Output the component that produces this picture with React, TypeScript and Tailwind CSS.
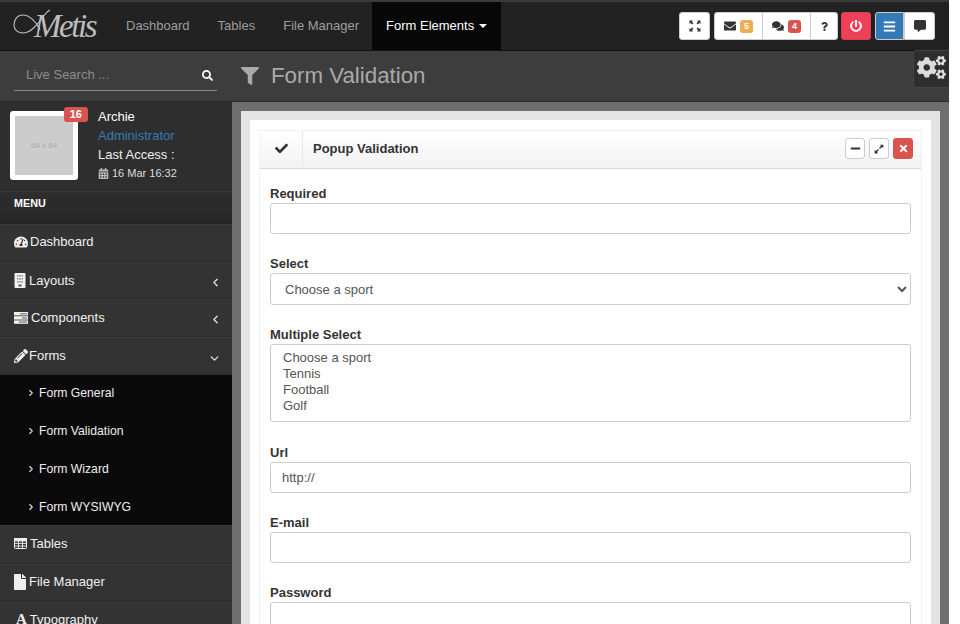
import React from "react";
import {
  FaCalendarAlt,
  FaCheck,
  FaCogs,
  FaCommentAlt,
  FaComments,
  FaEnvelope,
  FaExpandAlt,
  FaFile,
  FaFilter,
  FaMinus,
  FaPencilAlt,
  FaPowerOff,
  FaQuestion,
  FaSearch,
  FaTachometerAlt,
  FaTimes,
  FaBars,
} from "react-icons/fa";
import { ChevronDown, ChevronLeft, ChevronRight } from "lucide-react";

const topLinks = ["Dashboard", "Tables", "File Manager"];

const subItems = ["Form General", "Form Validation", "Form Wizard", "Form WYSIWYG"];

function Corners({ className }: { className?: string }) {
  return (
    <svg viewBox="0 0 12 12" className={className} fill="currentColor">
      <path d="M0.5 0.5h3.6l-1.2 1.2 1.6 1.6-1.2 1.2-1.6-1.6-1.2 1.2z" />
      <path d="M11.5 0.5v3.6l-1.2-1.2-1.6 1.6-1.2-1.2 1.6-1.6-1.2-1.2z" />
      <path d="M0.5 11.5v-3.6l1.2 1.2 1.6-1.6 1.2 1.2-1.6 1.6 1.2 1.2z" />
      <path d="M11.5 11.5h-3.6l1.2-1.2-1.6-1.6 1.2-1.2 1.6 1.6 1.2-1.2z" />
    </svg>
  );
}

// fa-building, white block with window grid
function BuildingIcon() {
  return (
    <svg viewBox="0 0 12 15" className="h-[15px] w-[12px]">
      <rect x="0.5" y="0" width="11" height="15" rx="1" fill="#f0f0f0" />
      {[2, 5, 8].map((y) =>
        [3, 5.2, 7.4].map((x) => <rect key={`${x}-${y}`} x={x} y={y} width="1.4" height="1.6" fill="#8a8a8a" />)
      )}
      <rect x="4.5" y="11.5" width="3" height="2" fill="#555" />
    </svg>
  );
}

// fa-tasks, three bars with a darker section
function TasksIcon() {
  return (
    <svg viewBox="0 0 14 12" className="h-[12px] w-[14px]">
      {[0, 4.2, 8.4].map((y) => (
        <rect key={y} x="0" y={y} width="14" height="3.4" fill="#f0f0f0" />
      ))}
      <rect x="6" y="1" width="7" height="1.4" fill="#8a8a8a" />
      <rect x="8" y="5.2" width="5" height="1.4" fill="#8a8a8a" />
      <rect x="5" y="9.4" width="8" height="1.4" fill="#8a8a8a" />
    </svg>
  );
}

// fa-table, heavy frame with small cells
function TableIcon() {
  return (
    <svg viewBox="0 0 13 11" className="-mt-[2px] h-[11px] w-[13px]" fill="none" stroke="#f0f0f0">
      <rect x="0.5" y="0.5" width="12" height="10" rx="0.8" />
      <rect x="0.5" y="0.5" width="12" height="2.4" fill="#f0f0f0" />
      <path d="M4.5 3v7.5M8.5 3v7.5M0.5 5.4h12M0.5 8h12" strokeWidth="0.9" />
    </svg>
  );
}

function Logo() {
  return (
    <div className="relative flex h-[48px] w-[112px] shrink-0 items-center pl-[34px]">
      <svg viewBox="0 0 50 34" className="absolute left-[12px] top-[4px] h-[34px] w-[50px] text-[#bdbdbd]" fill="none" stroke="currentColor">
        <path d="M28 24 C24 15 17 9 11 9 C5 9 2 14 2 19 C2 24 6 27 11 27 C18 27 23 21 27 16 C30 12 33 7 38 4" strokeWidth="1.1" />
      </svg>
      <span className="relative font-['Liberation_Serif',serif] text-[33px] italic leading-none tracking-[-2.4px] text-[#bdbdbd]">
        Metis
      </span>
    </div>
  );
}

function NavButton({ children, className }: { children: React.ReactNode; className?: string }) {
  return (
    <div className={`flex h-[28px] items-center justify-center gap-[4px] border border-[#ccc] text-[#333] ${className ?? ""}`}>
      {children}
    </div>
  );
}

function TopBar() {
  return (
    <header className="border-t-2 border-b border-t-[#3a3a3a] border-b-[#111] bg-[#222]">
      <div className="flex h-[48px] items-center pr-[14px]">
        <Logo />
        {topLinks.map((l) => (
          <a key={l} className="px-[14px] text-[#9d9d9d]">
            {l}
          </a>
        ))}
        <a className="-ml-px flex h-[48px] items-center gap-[5px] bg-[#080808] px-[14px] text-white">
          Form Elements
          <span className="h-0 w-0 border-x-[4px] border-t-[4px] border-x-transparent border-t-white" />
        </a>
        <div className="ml-auto flex items-center gap-[4px]">
          <NavButton className="w-[31px] rounded-[3px] bg-white">
            <Corners className="h-[12px] w-[12px]" />
          </NavButton>
          <div className="-mr-px flex">
            <NavButton className="w-[49px] rounded-l-[3px] bg-white">
              <FaEnvelope className="text-[12px]" />
              <span className="rounded-[3px] bg-[#f0ad4e] px-[4px] text-[9px] font-bold leading-[13px] text-white">5</span>
            </NavButton>
            <NavButton className="-ml-px w-[49px] bg-white">
              <FaComments className="text-[12px]" />
              <span className="rounded-[3px] bg-[#d9534f] px-[4px] text-[9px] font-bold leading-[13px] text-white">4</span>
            </NavButton>
            <NavButton className="-ml-px w-[28px] rounded-r-[3px] bg-white">
              <FaQuestion className="text-[9px]" />
            </NavButton>
          </div>
          <NavButton className="w-[30px] rounded-[3px] border-[#d43f5a] bg-[#ef4058] text-white">
            <FaPowerOff className="text-[12px]" />
          </NavButton>
          <div className="flex">
            <NavButton className="w-[29px] rounded-l-[3px] border-[#337ab7] bg-[#337ab7] text-white">
              <FaBars className="text-[13px]" />
            </NavButton>
            <NavButton className="w-[31px] rounded-r-[3px] bg-white">
              <FaCommentAlt className="text-[12px]" />
            </NavButton>
          </div>
        </div>
      </div>
    </header>
  );
}

function MenuItem({
  icon,
  label,
  arrow,
  height,
  gap,
  lift,
}: {
  icon: React.ReactNode;
  label: string;
  arrow?: "left" | "down";
  height: string;
  gap: string;
  lift: string;
}) {
  return (
    <div className={`flex items-center border-b border-t border-b-[#2c2c2c] border-t-[#3a3a3a] bg-[#333] pl-[14px] text-[#f0f0f0] ${height}`}>
      <span className={`flex justify-center text-[14px] text-[#eee] ${gap} ${lift}`}>{icon}</span>
      <span className={lift}>{label}</span>
      {arrow === "left" && <ChevronLeft size={13} strokeWidth={2.6} className="ml-auto mr-[10px] mt-[3px] text-[#ddd]" />}
      {arrow === "down" && <ChevronDown size={13} strokeWidth={2.6} className="ml-auto mr-[11px] mt-[4px] text-[#ddd]" />}
    </div>
  );
}

function Sidebar() {
  return (
    <aside className="w-[232px] shrink-0 bg-[#333]">
      <div className="h-[51px] border-b border-[#2a2a2a] bg-[#3d3d3d] pl-[14px] pr-[15px] pt-[9px]">
        <div className="flex h-[31px] items-center border-b border-[#8a8a8a] pl-[12px] pr-[4px]">
          <span className="text-[#8c8c8c]">Live Search ...</span>
          <FaSearch className="ml-auto text-[11px] text-white" />
        </div>
      </div>
      <div className="flex h-[90px] border-b border-[#3a3a3a] bg-[#2e2e2e] pl-[10px] pt-[9px]">
        <div className="relative h-[69px] w-[68px] shrink-0 rounded-[3px] border-[5px] border-white bg-[#ccc]">
          <span className="absolute inset-0 flex items-center justify-center text-[8px] text-[#a8a8a8]">64 x 64</span>
          <span className="absolute -right-[15px] -top-[9px] rounded-[3px] bg-[#d9534f] px-[6px] text-[11px] font-bold leading-[15px] text-white">16</span>
        </div>
        <div className="ml-[20px] leading-[19px] text-[#eee]">
          <div className="-mt-[4px] text-white">Archie</div>
          <div className="text-[#337ab7]">Administrator</div>
          <div>Last Access :</div>
          <div className="flex items-center gap-[3px] text-[11px] text-[#ddd]">
            <FaCalendarAlt className="text-[11px] text-[#bbb]" />
            16 Mar 16:32
          </div>
        </div>
      </div>
      <div className="flex h-[32px] items-start border-b border-[#222] bg-gradient-to-b from-[#2e2e2e] to-[#272727] pl-[14px] pt-[3px] text-[10.8px] font-bold text-white">
        MENU
      </div>
      <MenuItem icon={<FaTachometerAlt />} label="Dashboard" height="h-[38px]" gap="mr-[2px]" lift="-mt-[3px]" />
      <MenuItem icon={<BuildingIcon />} label="Layouts" arrow="left" height="h-[37px]" gap="mr-[3px]" lift="" />
      <MenuItem icon={<TasksIcon />} label="Components" arrow="left" height="h-[38px]" gap="mr-[3px]" lift="" />
      <MenuItem icon={<FaPencilAlt />} label="Forms" arrow="down" height="h-[38px]" gap="mr-[1px]" lift="" />
      <div className="flex h-[150px] flex-col justify-center bg-[#0a0a0a]">
        {subItems.map((s) => (
          <div key={s} className="flex h-[38px] shrink-0 items-center pl-[26px] text-[12.2px] text-[#eee]">
            <ChevronRight size={10} strokeWidth={2.6} className="mr-[3px] text-[#ddd]" />
            {s}
          </div>
        ))}
      </div>
      <MenuItem icon={<TableIcon />} label="Tables" height="h-[39px]" gap="mr-[3px]" lift="-mt-[1px]" />
      <MenuItem icon={<FaFile className="-mx-[2px] text-[16px]" />} label="File Manager" height="h-[38px]" gap="mr-[3px]" lift="-mt-[2px]" />
      <MenuItem
        icon={<span className="ml-[2px] mr-[3px] font-['Liberation_Serif',serif] text-[15px] font-bold leading-none">A</span>}
        label="Typography"
        height="h-[38px]"
        gap=""
        lift="-mt-[3px]"
      />
    </aside>
  );
}

function Field({ label, children }: { label: string; children: React.ReactNode }) {
  return (
    <div className="mb-[19px]">
      <label className="block pt-[1px] font-bold leading-[19px] text-[#333]">{label}</label>
      {children}
    </div>
  );
}

const inputClass = "block h-[31px] w-full rounded-[3px] border border-[#ccc] bg-white px-[11px] text-[#555] outline-none";

function FormBox() {
  return (
    <div className="border border-[#f2f2f2] bg-white">
      <div className="flex h-[38px] items-center border-b border-[#d8d8d8] bg-gradient-to-b from-white to-[#f2f2f2]">
        <div className="flex h-full w-[43px] items-center justify-center border-r border-[#e8e8e8] pb-[2px] text-[13px] text-[#333]">
          <FaCheck />
        </div>
        <span className="mb-[2px] ml-[10px] font-bold text-[#333]">Popup Validation</span>
        <div className="mb-[2px] ml-auto mr-[8px] flex gap-[4px]">
          <div className="flex h-[21px] w-[20px] items-center justify-center rounded-[3px] border border-[#ccc] bg-white text-[11px] text-[#333]">
            <FaMinus />
          </div>
          <div className="flex h-[21px] w-[20px] items-center justify-center rounded-[3px] border border-[#ccc] bg-white text-[10px] text-[#333]">
            <FaExpandAlt />
          </div>
          <div className="flex h-[21px] w-[20px] items-center justify-center rounded-[3px] border border-[#d9534f] bg-[#d9534f] text-[11px] text-white">
            <FaTimes />
          </div>
        </div>
      </div>
      <div className="px-[10px] pt-[14px]">
        <Field label="Required">
          <input className={inputClass} readOnly />
        </Field>
        <Field label="Select">
          <select className="block h-[32px] w-full rounded-[3px] border border-[#ccc] bg-white px-[10px] text-[#555] outline-none" defaultValue="Choose a sport">
            <option>Choose a sport</option>
            <option>Tennis</option>
            <option>Football</option>
            <option>Golf</option>
          </select>
        </Field>
        <div className="mb-[20px]">
          <label className="block pt-[1px] font-bold leading-[19px] text-[#333]">Multiple Select</label>
          <select multiple className="block h-[78px] w-full overflow-hidden rounded-[3px] border border-[#ccc] bg-white px-[12px] pt-[5px] text-[#555] outline-none">
            <option className="h-[16px]">Choose a sport</option>
            <option className="h-[16px]">Tennis</option>
            <option className="h-[16px]">Football</option>
            <option className="h-[16px]">Golf</option>
          </select>
        </div>
        <Field label="Url">
          <input className={inputClass} defaultValue="http://" readOnly />
        </Field>
        <Field label="E-mail">
          <input className={inputClass} readOnly />
        </Field>
        <Field label="Password">
          <input className={inputClass} readOnly />
        </Field>
      </div>
    </div>
  );
}

export default function App() {
  return (
    <div className="h-[624px] w-[960px] overflow-hidden bg-white font-['Liberation_Sans',Arial,sans-serif] text-[13px]">
      <div className="relative h-full w-[949px]">
        <TopBar />
        <div className="flex h-[573px]">
          <Sidebar />
          <main className="min-w-0 flex-1 bg-[#6e6e6e]">
            <div className="flex h-[51px] items-center border-b border-[#2a2a2a] bg-[#3d3d3d] pl-[9px] text-[22.3px] text-[#aaa]">
              <FaFilter className="mr-[12px] text-[18px]" />
              Form Validation
            </div>
            <div className="ml-[9px] mr-[9px] mt-[9px] h-full border-[9px] border-[#e3e3e3] bg-white">
              <div className="pb-[10px] pl-[9px] pr-[9px] pt-[10px]">
                <FormBox />
              </div>
            </div>
          </main>
        </div>
        <div className="absolute right-0 top-[50px] flex h-[38px] w-[36px] items-center justify-center rounded-l-[4px] border border-r-0 border-[#444] bg-[#2e2e2e] pb-[3px] text-[#dcdcdc]">
          <FaCogs className="text-[29px]" />
        </div>
      </div>
    </div>
  );
}
